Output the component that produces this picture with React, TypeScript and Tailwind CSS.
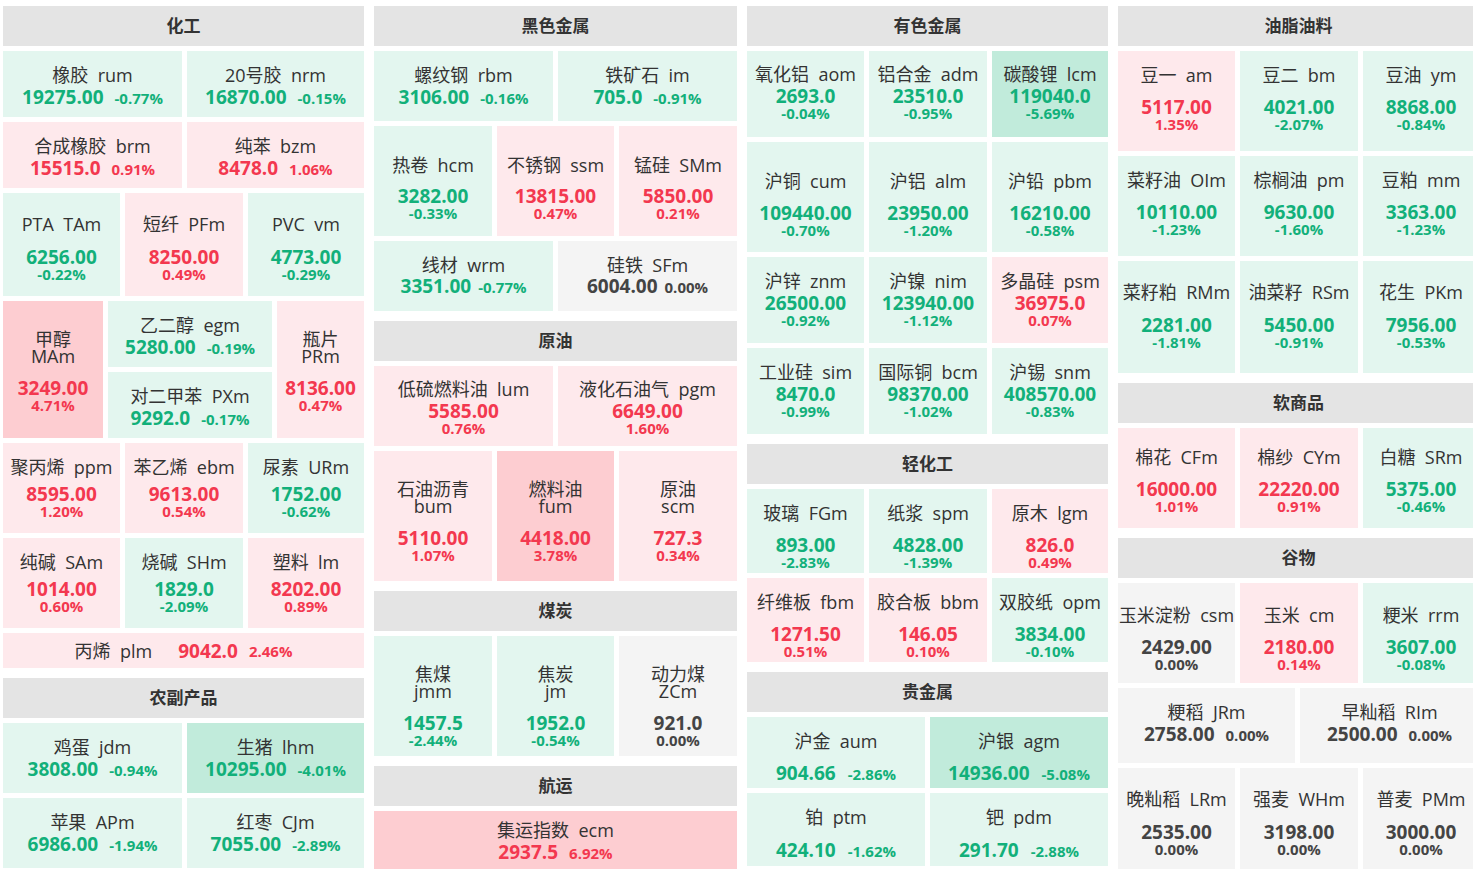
import React from 'react';

type Clr = 'G' | 'G2' | 'R' | 'R2' | 'N';
type Fmt = 'A' | 'B' | 'C' | 'D';
interface TD {
  n: string;
  c: string;
  v: string;
  p: string;
  k: Clr;
  w: string;
  f: Fmt;
  pt: string;
  g: string;
  vg: string;
}
type Raw = [string, string, string, string, Clr, string];

const BG: Record<Clr, string> = {
  G: 'bg-[#e3f6ef]',
  G2: 'bg-[#c1ebdb]',
  R: 'bg-[#fee9ec]',
  R2: 'bg-[#fdcdd1]',
  N: 'bg-[#f4f4f4]',
};
const TC: Record<Clr, string> = {
  G: 'text-[#12b07a]',
  G2: 'text-[#12b07a]',
  R: 'text-[#f3384f]',
  R2: 'text-[#f3384f]',
  N: 'text-[#444444]',
};

const mk = (f: Fmt, pt: string, g: string, raws: Raw[], vg = 'ml-[11px]'): TD[] =>
  raws.map(([n, c, v, p, k, w]) => ({ n, c, v, p, k, w, f, pt, g, vg }));

function Tile({ t, h = 'h-full' }: { t: TD; h?: string }) {
  const name = (
    <>
      {t.n}
      {'\u00a0\u00a0'}
      {t.c}
    </>
  );
  if (t.f === 'D') {
    return (
      <div className={`${t.w} ${h} ${BG[t.k]} flex items-center justify-center whitespace-nowrap`}>
        <span className="text-[18px] leading-[22px] text-[#333333]">{name}</span>
        <span className={`text-[19px] leading-[22px] font-bold ml-[26px] ${TC[t.k]}`}>{t.v}</span>
        <span className={`text-[15px] leading-[22px] font-bold ml-[11px] ${TC[t.k]}`}>{t.p}</span>
      </div>
    );
  }
  return (
    <div className={`${t.w} ${h} shrink-0 ${BG[t.k]} ${t.pt} flex flex-col items-center whitespace-nowrap`}>
      {t.f === 'C' ? (
        <div className="text-[18px] leading-[17px] text-[#333333] flex flex-col items-center">
          <div>{t.n}</div>
          <div>{t.c}</div>
        </div>
      ) : (
        <div className="text-[18px] leading-[22px] text-[#333333]">{name}</div>
      )}
      {t.f === 'A' ? (
        <div className={`${t.g} flex items-baseline font-bold ${TC[t.k]}`}>
          <span className="text-[19px] leading-[18px]">{t.v}</span>
          <span className={`text-[15px] leading-[18px] ${t.vg}`}>{t.p}</span>
        </div>
      ) : (
        <div className={`${t.g} flex flex-col items-center font-bold ${TC[t.k]}`}>
          <span className="text-[19px] leading-[18px]">{t.v}</span>
          <span className="text-[15px] leading-[16px]">{t.p}</span>
        </div>
      )}
    </div>
  );
}

function Header({ title }: { title: string }) {
  return (
    <div className="h-[40px] shrink-0 bg-[#e4e4e4] flex items-center justify-center text-[17px] font-bold text-[#333333]">
      {title}
    </div>
  );
}

function Row({ h, tiles }: { h: string; tiles: TD[] }) {
  return (
    <div className={`flex gap-[5px] ${h} shrink-0`}>
      {tiles.map((t) => (
        <Tile key={t.c} t={t} />
      ))}
    </div>
  );
}

function Section({ title, children }: { title: string; children: React.ReactNode }) {
  return (
    <div className="flex flex-col gap-[5px]">
      <Header title={title} />
      {children}
    </div>
  );
}

const maTile = mk('C', 'pt-[30px]', 'mt-[14px]', [['甲醇', 'MAm', '3249.00', '4.71%', 'R2', 'w-[100px]']])[0];
const prTile = mk('C', 'pt-[30px]', 'mt-[14px]', [['瓶片', 'PRm', '8136.00', '0.47%', 'R', 'w-[87px]']])[0];
const egTiles = mk('A', 'pt-[13px]', 'mt-[2px]', [
  ['乙二醇', 'egm', '5280.00', '-0.19%', 'G', 'w-full'],
  ['对二甲苯', 'PXm', '9292.0', '-0.17%', 'G', 'w-full'],
]);

function Col1() {
  return (
    <div className="w-[361px] shrink-0 flex flex-col gap-[10px]">
      <Section title="化工">
        <Row
          h="h-[66px]"
          tiles={mk('A', 'pt-[13px]', 'mt-[2px]', [
            ['橡胶', 'rum', '19275.00', '-0.77%', 'G', 'w-[179px]'],
            ['20号胶', 'nrm', '16870.00', '-0.15%', 'G', 'w-[177px]'],
          ])}
        />
        <Row
          h="h-[66px]"
          tiles={mk('A', 'pt-[13px]', 'mt-[2px]', [
            ['合成橡胶', 'brm', '15515.0', '0.91%', 'R', 'w-[179px]'],
            ['纯苯', 'bzm', '8478.0', '1.06%', 'R', 'w-[177px]'],
          ])}
        />
        <Row
          h="h-[103px]"
          tiles={mk('B', 'pt-[20px]', 'mt-[13px]', [
            ['PTA', 'TAm', '6256.00', '-0.22%', 'G', 'w-[117px]'],
            ['短纤', 'PFm', '8250.00', '0.49%', 'R', 'w-[118px]'],
            ['PVC', 'vm', '4773.00', '-0.29%', 'G', 'w-[116px]'],
          ])}
        />
        <div className="flex gap-[5px] h-[137px] shrink-0">
          <Tile t={maTile} />
          <div className="w-[164px] shrink-0 flex flex-col gap-[5px]">
            <Tile t={egTiles[0]} h="h-[66px]" />
            <Tile t={egTiles[1]} h="h-[66px]" />
          </div>
          <Tile t={prTile} />
        </div>
        <Row
          h="h-[90px]"
          tiles={mk('B', 'pt-[13px]', 'mt-[7px]', [
            ['聚丙烯', 'ppm', '8595.00', '1.20%', 'R', 'w-[117px]'],
            ['苯乙烯', 'ebm', '9613.00', '0.54%', 'R', 'w-[118px]'],
            ['尿素', 'URm', '1752.00', '-0.62%', 'G', 'w-[116px]'],
          ])}
        />
        <Row
          h="h-[90px]"
          tiles={mk('B', 'pt-[13px]', 'mt-[7px]', [
            ['纯碱', 'SAm', '1014.00', '0.60%', 'R', 'w-[117px]'],
            ['烧碱', 'SHm', '1829.0', '-2.09%', 'G', 'w-[118px]'],
            ['塑料', 'lm', '8202.00', '0.89%', 'R', 'w-[116px]'],
          ])}
        />
        <Row h="h-[35px]" tiles={mk('D', '', '', [['丙烯', 'plm', '9042.0', '2.46%', 'R', 'w-full']])} />
      </Section>
      <Section title="农副产品">
        <Row
          h="h-[70px]"
          tiles={mk('A', 'pt-[13px]', 'mt-[2px]', [
            ['鸡蛋', 'jdm', '3808.00', '-0.94%', 'G', 'w-[179px]'],
            ['生猪', 'lhm', '10295.00', '-4.01%', 'G2', 'w-[177px]'],
          ])}
        />
        <Row
          h="h-[70px]"
          tiles={mk('A', 'pt-[13px]', 'mt-[2px]', [
            ['苹果', 'APm', '6986.00', '-1.94%', 'G', 'w-[179px]'],
            ['红枣', 'CJm', '7055.00', '-2.89%', 'G', 'w-[177px]'],
          ])}
        />
      </Section>
    </div>
  );
}

function Col2() {
  return (
    <div className="w-[363px] shrink-0 flex flex-col gap-[10px]">
      <Section title="黑色金属">
        <Row
          h="h-[70px]"
          tiles={mk('A', 'pt-[13px]', 'mt-[2px]', [
            ['螺纹钢', 'rbm', '3106.00', '-0.16%', 'G', 'w-[179px]'],
            ['铁矿石', 'im', '705.0', '-0.91%', 'G', 'w-[179px]'],
          ])}
        />
        <Row
          h="h-[110px]"
          tiles={mk('B', 'pt-[28px]', 'mt-[11px]', [
            ['热卷', 'hcm', '3282.00', '-0.33%', 'G', 'w-[118px]'],
            ['不锈钢', 'ssm', '13815.00', '0.47%', 'R', 'w-[117px]'],
            ['锰硅', 'SMm', '5850.00', '0.21%', 'R', 'w-[118px]'],
          ])}
        />
        <Row
          h="h-[70px]"
          tiles={mk(
            'A',
            'pt-[13px]',
            'mt-[1px]',
            [
              ['线材', 'wrm', '3351.00', '-0.77%', 'G', 'w-[179px]'],
              ['硅铁', 'SFm', '6004.00', '0.00%', 'N', 'w-[179px]'],
            ],
            'ml-[7px]'
          )}
        />
      </Section>
      <Section title="原油">
        <Row
          h="h-[80px]"
          tiles={mk('B', 'pt-[12px]', 'mt-[2px]', [
            ['低硫燃料油', 'lum', '5585.00', '0.76%', 'R', 'w-[179px]'],
            ['液化石油气', 'pgm', '6649.00', '1.60%', 'R', 'w-[179px]'],
          ])}
        />
        <Row
          h="h-[130px]"
          tiles={mk('C', 'pt-[30px]', 'mt-[14px]', [
            ['石油沥青', 'bum', '5110.00', '1.07%', 'R', 'w-[118px]'],
            ['燃料油', 'fum', '4418.00', '3.78%', 'R2', 'w-[117px]'],
            ['原油', 'scm', '727.3', '0.34%', 'R', 'w-[118px]'],
          ])}
        />
      </Section>
      <Section title="煤炭">
        <Row
          h="h-[120px]"
          tiles={mk('C', 'pt-[30px]', 'mt-[14px]', [
            ['焦煤', 'jmm', '1457.5', '-2.44%', 'G', 'w-[118px]'],
            ['焦炭', 'jm', '1952.0', '-0.54%', 'G', 'w-[117px]'],
            ['动力煤', 'ZCm', '921.0', '0.00%', 'N', 'w-[118px]'],
          ])}
        />
      </Section>
      <Section title="航运">
        <Row
          h="h-[60px]"
          tiles={mk('A', 'pt-[8px]', 'mt-[2px]', [['集运指数', 'ecm', '2937.5', '6.92%', 'R2', 'w-full']])}
        />
      </Section>
    </div>
  );
}

function Col3() {
  return (
    <div className="w-[361px] shrink-0 flex flex-col gap-[10px]">
      <Section title="有色金属">
        <Row
          h="h-[86px]"
          tiles={mk('B', 'pt-[12px]', 'mt-[2px]', [
            ['氧化铝', 'aom', '2693.0', '-0.04%', 'G', 'w-[117px]'],
            ['铝合金', 'adm', '23510.0', '-0.95%', 'G', 'w-[118px]'],
            ['碳酸锂', 'lcm', '119040.0', '-5.69%', 'G2', 'w-[116px]'],
          ])}
        />
        <Row
          h="h-[110px]"
          tiles={mk('B', 'pt-[28px]', 'mt-[12px]', [
            ['沪铜', 'cum', '109440.00', '-0.70%', 'G', 'w-[117px]'],
            ['沪铝', 'alm', '23950.00', '-1.20%', 'G', 'w-[118px]'],
            ['沪铅', 'pbm', '16210.00', '-0.58%', 'G', 'w-[116px]'],
          ])}
        />
        <Row
          h="h-[86px]"
          tiles={mk('B', 'pt-[13px]', 'mt-[2px]', [
            ['沪锌', 'znm', '26500.00', '-0.92%', 'G', 'w-[117px]'],
            ['沪镍', 'nim', '123940.00', '-1.12%', 'G', 'w-[118px]'],
            ['多晶硅', 'psm', '36975.0', '0.07%', 'R', 'w-[116px]'],
          ])}
        />
        <Row
          h="h-[86px]"
          tiles={mk('B', 'pt-[13px]', 'mt-[2px]', [
            ['工业硅', 'sim', '8470.0', '-0.99%', 'G', 'w-[117px]'],
            ['国际铜', 'bcm', '98370.00', '-1.02%', 'G', 'w-[118px]'],
            ['沪锡', 'snm', '408570.00', '-0.83%', 'G', 'w-[116px]'],
          ])}
        />
      </Section>
      <Section title="轻化工">
        <Row
          h="h-[84px]"
          tiles={mk('B', 'pt-[13px]', 'mt-[12px]', [
            ['玻璃', 'FGm', '893.00', '-2.83%', 'G', 'w-[117px]'],
            ['纸浆', 'spm', '4828.00', '-1.39%', 'G', 'w-[118px]'],
            ['原木', 'lgm', '826.0', '0.49%', 'R', 'w-[116px]'],
          ])}
        />
        <Row
          h="h-[84px]"
          tiles={mk('B', 'pt-[13px]', 'mt-[12px]', [
            ['纤维板', 'fbm', '1271.50', '0.51%', 'R', 'w-[117px]'],
            ['胶合板', 'bbm', '146.05', '0.10%', 'R', 'w-[118px]'],
            ['双胶纸', 'opm', '3834.00', '-0.10%', 'G', 'w-[116px]'],
          ])}
        />
      </Section>
      <Section title="贵金属">
        <Row
          h="h-[71px]"
          tiles={mk(
            'A',
            'pt-[13px]',
            'mt-[12px]',
            [
              ['沪金', 'aum', '904.66', '-2.86%', 'G', 'w-[178px]'],
              ['沪银', 'agm', '14936.00', '-5.08%', 'G2', 'w-[178px]'],
            ],
            'ml-[12px]'
          )}
        />
        <Row
          h="h-[73px]"
          tiles={mk(
            'A',
            'pt-[13px]',
            'mt-[13px]',
            [
              ['铂', 'ptm', '424.10', '-1.62%', 'G', 'w-[178px]'],
              ['钯', 'pdm', '291.70', '-2.88%', 'G', 'w-[178px]'],
            ],
            'ml-[12px]'
          )}
        />
      </Section>
    </div>
  );
}

function Col4() {
  return (
    <div className="w-[361px] shrink-0 flex flex-col gap-[10px]">
      <Section title="油脂油料">
        <Row
          h="h-[100px]"
          tiles={mk('B', 'pt-[13px]', 'mt-[12px]', [
            ['豆一', 'am', '5117.00', '1.35%', 'R', 'w-[117px]'],
            ['豆二', 'bm', '4021.00', '-2.07%', 'G', 'w-[118px]'],
            ['豆油', 'ym', '8868.00', '-0.84%', 'G', 'w-[116px]'],
          ])}
        />
        <Row
          h="h-[100px]"
          tiles={mk('B', 'pt-[13px]', 'mt-[12px]', [
            ['菜籽油', 'OIm', '10110.00', '-1.23%', 'G', 'w-[117px]'],
            ['棕榈油', 'pm', '9630.00', '-1.60%', 'G', 'w-[118px]'],
            ['豆粕', 'mm', '3363.00', '-1.23%', 'G', 'w-[116px]'],
          ])}
        />
        <Row
          h="h-[112px]"
          tiles={mk('B', 'pt-[20px]', 'mt-[13px]', [
            ['菜籽粕', 'RMm', '2281.00', '-1.81%', 'G', 'w-[117px]'],
            ['油菜籽', 'RSm', '5450.00', '-0.91%', 'G', 'w-[118px]'],
            ['花生', 'PKm', '7956.00', '-0.53%', 'G', 'w-[116px]'],
          ])}
        />
      </Section>
      <Section title="软商品">
        <Row
          h="h-[100px]"
          tiles={mk('B', 'pt-[18px]', 'mt-[12px]', [
            ['棉花', 'CFm', '16000.00', '1.01%', 'R', 'w-[117px]'],
            ['棉纱', 'CYm', '22220.00', '0.91%', 'R', 'w-[118px]'],
            ['白糖', 'SRm', '5375.00', '-0.46%', 'G', 'w-[116px]'],
          ])}
        />
      </Section>
      <Section title="谷物">
        <Row
          h="h-[100px]"
          tiles={mk('B', 'pt-[21px]', 'mt-[12px]', [
            ['玉米淀粉', 'csm', '2429.00', '0.00%', 'N', 'w-[117px]'],
            ['玉米', 'cm', '2180.00', '0.14%', 'R', 'w-[118px]'],
            ['粳米', 'rrm', '3607.00', '-0.08%', 'G', 'w-[116px]'],
          ])}
        />
        <Row
          h="h-[75px]"
          tiles={mk('A', 'pt-[13px]', 'mt-[2px]', [
            ['粳稻', 'JRm', '2758.00', '0.00%', 'N', 'w-[177px]'],
            ['早籼稻', 'RIm', '2500.00', '0.00%', 'N', 'w-[179px]'],
          ])}
        />
        <Row
          h="h-[101px]"
          tiles={mk('B', 'pt-[20px]', 'mt-[13px]', [
            ['晚籼稻', 'LRm', '2535.00', '0.00%', 'N', 'w-[117px]'],
            ['强麦', 'WHm', '3198.00', '0.00%', 'N', 'w-[118px]'],
            ['普麦', 'PMm', '3000.00', '0.00%', 'N', 'w-[116px]'],
          ])}
        />
      </Section>
    </div>
  );
}

export default function App() {
  return (
    <div className="w-[1473px] h-[869px] overflow-hidden bg-white font-['Open_Sans','Noto_Sans_CJK_SC',sans-serif]">
      <div className="flex gap-[10px] pl-[3px] pt-[6px] w-[1479px]">
        <Col1 />
        <Col2 />
        <Col3 />
        <Col4 />
      </div>
    </div>
  );
}
